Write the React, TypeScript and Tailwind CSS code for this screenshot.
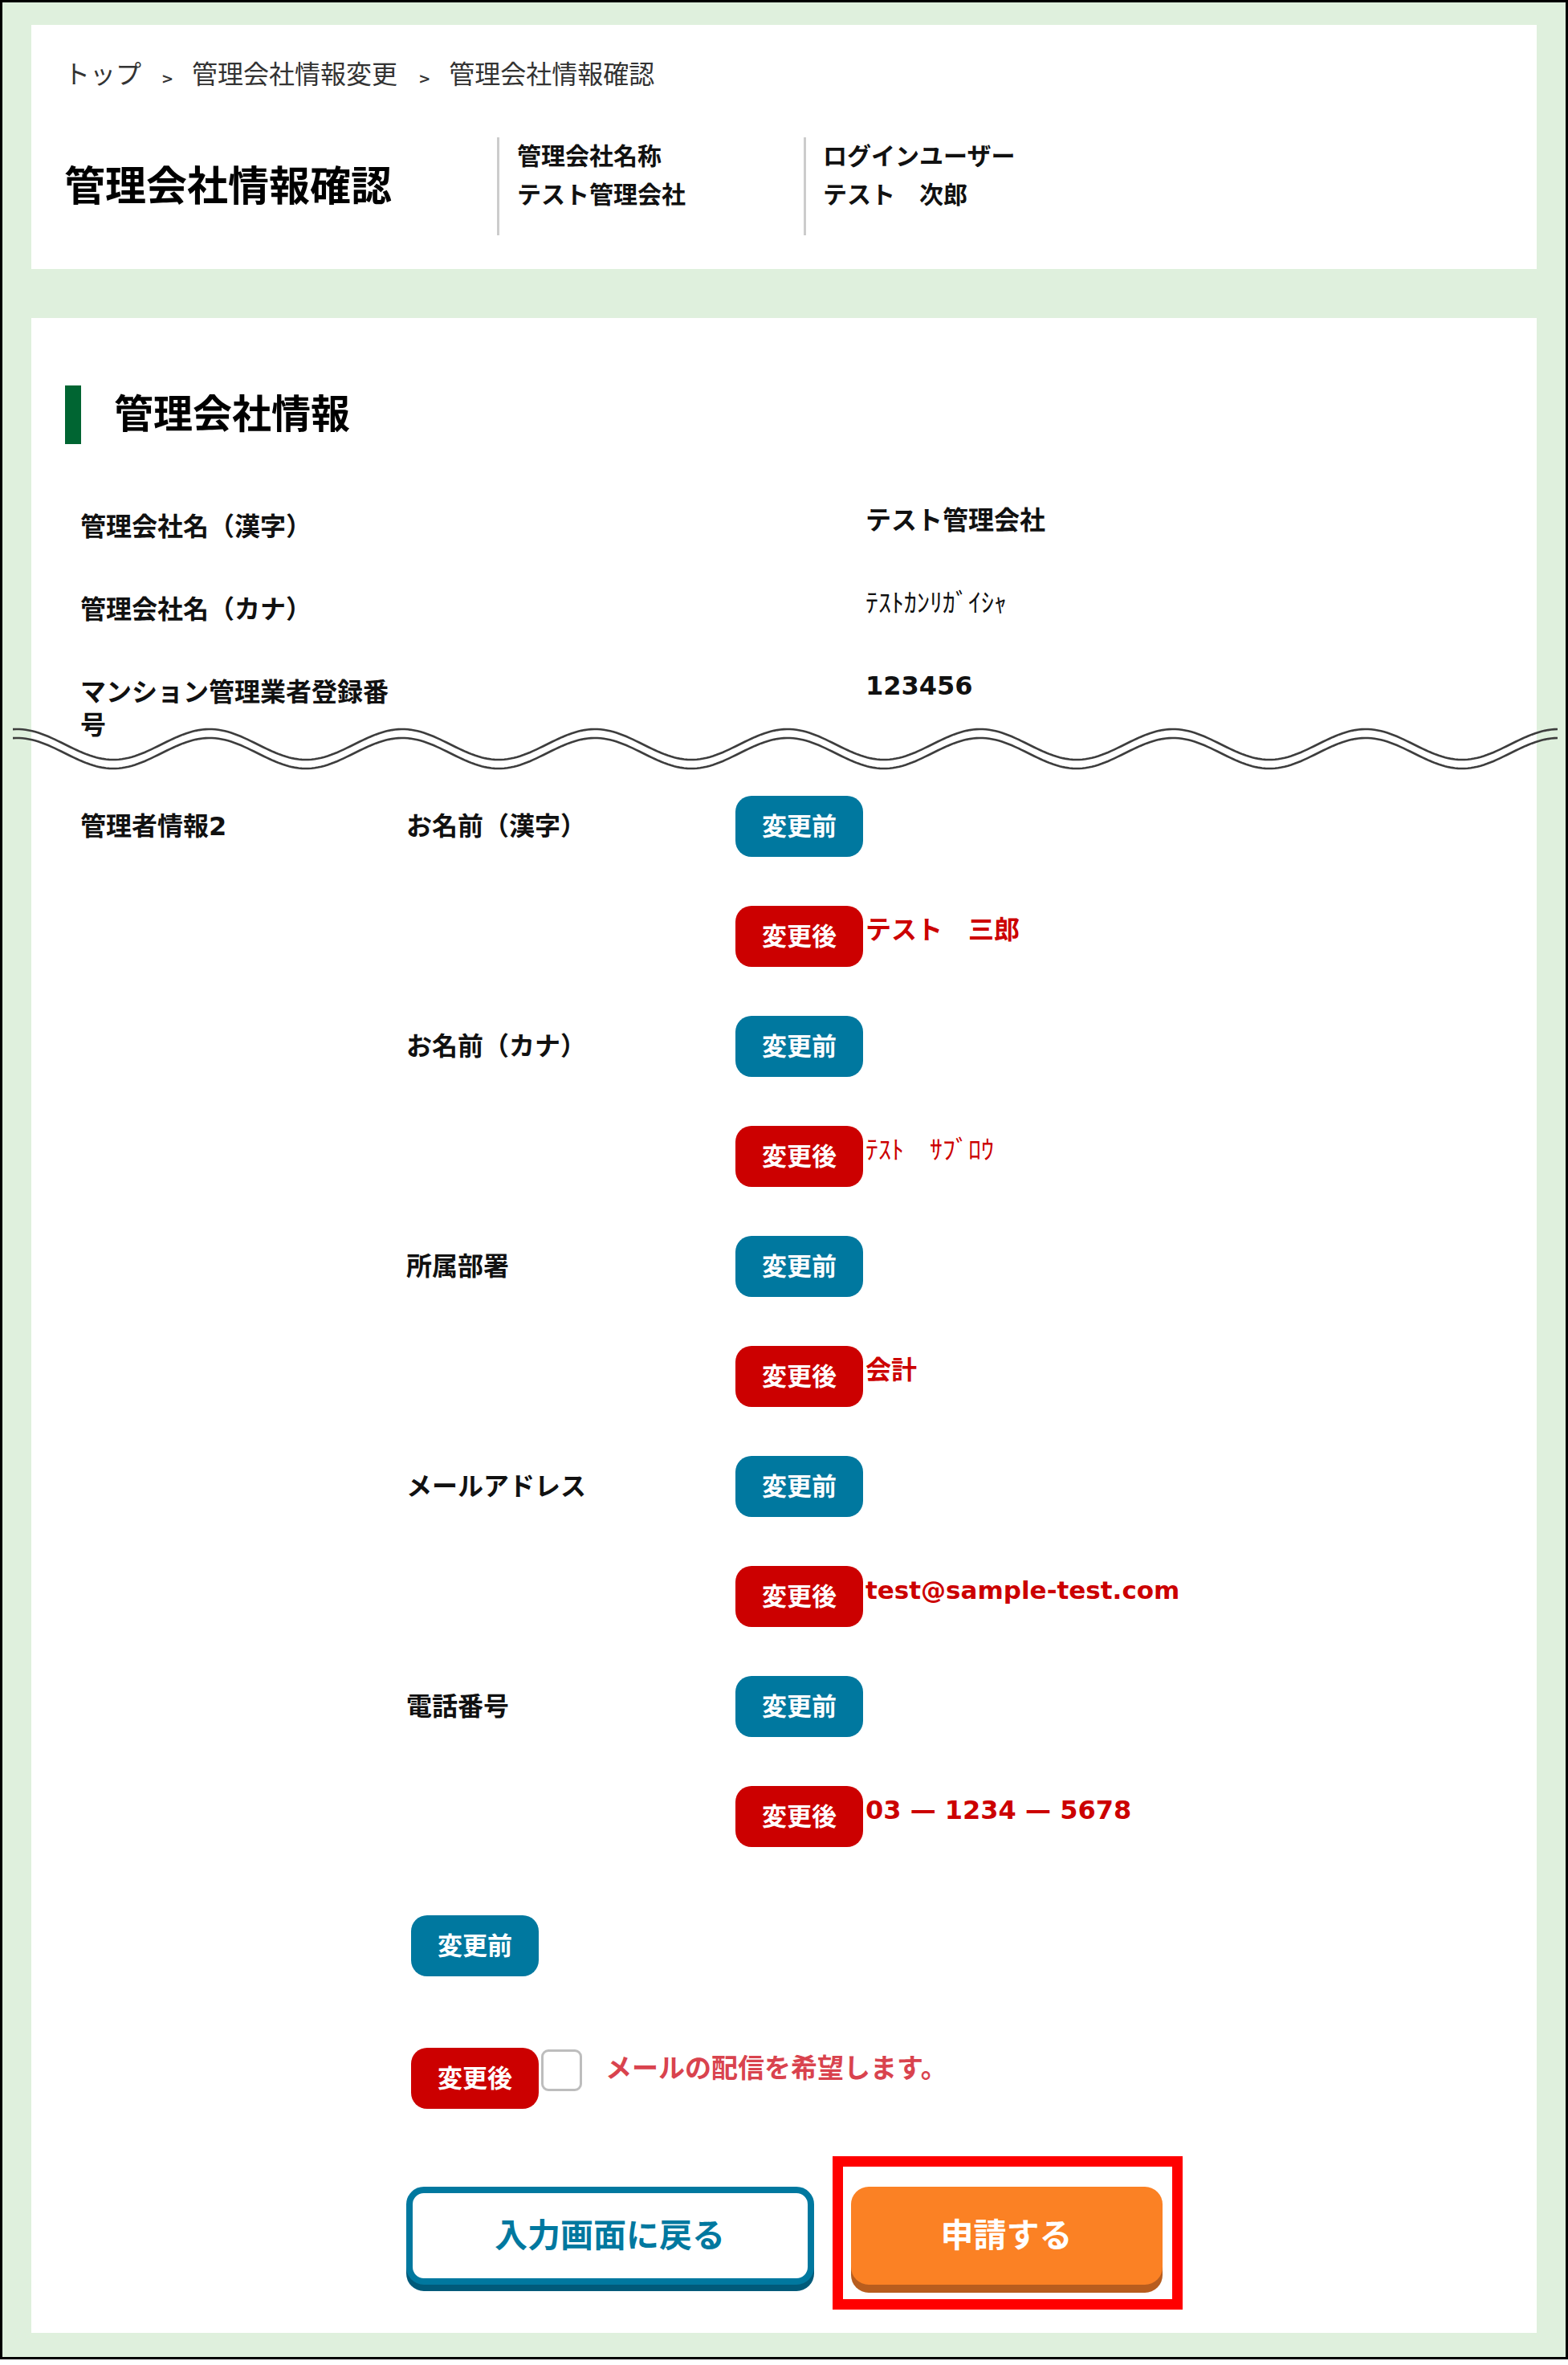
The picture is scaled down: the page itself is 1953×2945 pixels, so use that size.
import React from "react";

const FONT = "font-['DejaVu_Sans','Noto_Sans_CJK_JP',sans-serif]";

function wavePath(offset: number): string {
  let d = "";
  for (let x = 0; x <= 1924; x += 4) {
    const y = 29 + offset - 19 * Math.cos((2 * Math.PI * (x - 5)) / 240);
    d += (x === 0 ? "M" : "L") + x + " " + y.toFixed(2) + " ";
  }
  return d;
}

function Before({ className = "" }: { className?: string }) {
  return (
    <div
      className={
        "flex h-[76px] w-[159px] items-center justify-center rounded-[20px] bg-[#00789f] text-[31px] font-bold leading-none text-white " +
        className
      }
    >
      変更前
    </div>
  );
}

function After({ className = "" }: { className?: string }) {
  return (
    <div
      className={
        "flex h-[76px] w-[159px] items-center justify-center rounded-[20px] bg-[#cc0000] text-[31px] font-bold leading-none text-white " +
        className
      }
    >
      変更後
    </div>
  );
}

type Group = { main?: string; sub: string; value: string; weight: string; size: string };

const groups: Group[] = [
  { main: "管理者情報2", sub: "お名前（漢字）", value: "テスト　三郎", weight: "font-bold", size: "text-[32px]" },
  { sub: "お名前（カナ）", value: "ﾃｽﾄ　ｻﾌﾞﾛｳ", weight: "font-normal", size: "text-[32px]" },
  { sub: "所属部署", value: "会計", weight: "font-bold", size: "text-[32px]" },
  { sub: "メールアドレス", value: "test@sample-test.com", weight: "font-bold", size: "text-[31px]" },
  { sub: "電話番号", value: "03 — 1234 — 5678", weight: "font-bold", size: "text-[32px]" },
];

const GRID = "grid grid-cols-[406px_410px_162px_1fr]";

export default function App() {
  return (
    <div className={"w-full " + FONT}>
      <div className="border-[3px] border-black bg-[#dff0dd] px-[36px] pb-[30px] pt-[28px]">
        {/* Header card */}
        <div className="bg-white px-[41px] pb-[42px] pt-[39px]">
          <div className="flex h-[46px] items-baseline text-[32px] leading-[46px] text-[#333333]">
            <span>トップ</span>
            <span className="ml-[25px] mr-[23px] text-[18px] font-bold">&gt;</span>
            <span>管理会社情報変更</span>
            <span className="ml-[26px] mr-[23px] text-[18px] font-bold">&gt;</span>
            <span>管理会社情報確認</span>
          </div>
          <div className="mt-[55px] flex items-center">
            <div className="w-[539px] text-[51px] font-bold leading-[61px] text-black">管理会社情報確認</div>
            <div className="h-[122px] w-[382px] border-l-[3px] border-[#cccccc] pl-[22px] text-[30px] font-bold leading-[48px] text-[#111111]">
              <div>管理会社名称</div>
              <div>テスト管理会社</div>
            </div>
            <div className="h-[122px] border-l-[3px] border-[#cccccc] pl-[21px] text-[30px] font-bold leading-[48px] text-[#111111]">
              <div>ログインユーザー</div>
              <div>テスト　次郎</div>
            </div>
          </div>
        </div>

        {/* Main card */}
        <div className="mt-[61px] bg-white px-[42px] pb-[60px] pt-[84px] text-[#111111]">
          <div className="flex items-center">
            <div className="h-[73px] w-[20px] bg-[#006532]" />
            <div className="ml-[41px] text-[49px] font-bold leading-none text-black">管理会社情報</div>
          </div>

          <div className="ml-[19px] mt-[75px] flex flex-col gap-[54px]">
            <div className={GRID + " items-start"}>
              <div className="pt-[8px] text-[32px] font-bold leading-[41px]">管理会社名（漢字）</div>
              <div className="col-start-4 text-[32px] font-bold leading-[41px]">テスト管理会社</div>
            </div>
            <div className={GRID + " items-start"}>
              <div className="pt-[8px] text-[32px] font-bold leading-[41px]">管理会社名（カナ）</div>
              <div className="col-start-4 text-[32px] font-normal leading-[41px]">ﾃｽﾄｶﾝﾘｶﾞｲｼｬ</div>
            </div>
            <div className={GRID + " items-start"}>
              <div className="pt-[8px] text-[32px] font-bold leading-[41px]">マンション管理業者登録番号</div>
              <div className="col-start-4 text-[32px] font-bold leading-[41px]">123456</div>
            </div>
          </div>

          {/* Wavy break line */}
          <div className="relative -ml-[65px] -mt-[26px] h-[70px] w-[1924px]">
            <svg width="1924" height="70" viewBox="0 0 1924 70" className="block">
              <path d={wavePath(0)} fill="none" stroke="#3d3d3d" strokeWidth="2.6" />
              <path d={wavePath(11)} fill="none" stroke="#3d3d3d" strokeWidth="2.6" />
            </svg>
          </div>

          <div className="ml-[19px] mt-[23px] flex flex-col gap-[61px]">
            {groups.map((g, i) => (
              <React.Fragment key={i}>
                <div className={GRID + " items-center"}>
                  <div className="text-[32px] font-bold leading-[41px]">{g.main ?? ""}</div>
                  <div className="text-[32px] font-bold leading-[41px]">{g.sub}</div>
                  <Before />
                </div>
                <div className={GRID + " items-start"}>
                  <After className="col-start-3" />
                  <div className={"whitespace-nowrap pt-[10px] leading-[41px] text-[#cc0000] " + g.weight + " " + g.size}>
                    {g.value}
                  </div>
                </div>
              </React.Fragment>
            ))}
          </div>

          <div className={"ml-[19px] mt-[85px] " + GRID}>
            <div className="col-start-2 pl-[6px]">
              <Before />
            </div>
          </div>
          <div className={"ml-[19px] mt-[89px] " + GRID}>
            <div className="col-span-3 col-start-2 flex items-start pl-[6px]">
              <After />
              <div className="ml-[3px] mt-[2px] h-[52px] w-[51px] rounded-[9px] border-[3px] border-[#bdbdbd] bg-white" />
              <div className="ml-[29px] mt-[5px] text-[33px] font-bold leading-[41px] text-[#d9434e]">
                メールの配信を希望します。
              </div>
            </div>
          </div>

          <div className="mt-[97px] flex justify-center gap-[46px]">
            <div className="flex h-[122px] w-[508px] items-center justify-center rounded-[22px] border-[8px] border-[#00789f] bg-white text-[41px] font-bold leading-none text-[#00789f] shadow-[0_8px_0_#005a7a]">
              入力画面に戻る
            </div>
            <div className="relative">
              <div className="flex h-[122px] w-[388px] items-center justify-center rounded-[22px] bg-[#fb8124] text-[41px] font-bold leading-none text-white shadow-[0_10px_0_#b85d1e]">
                申請する
              </div>
              <div className="pointer-events-none absolute -bottom-[31px] -left-[23px] -right-[25px] -top-[38px] border-[13px] border-[#ff0000]" />
            </div>
          </div>
        </div>
      </div>
    </div>
  );
}
